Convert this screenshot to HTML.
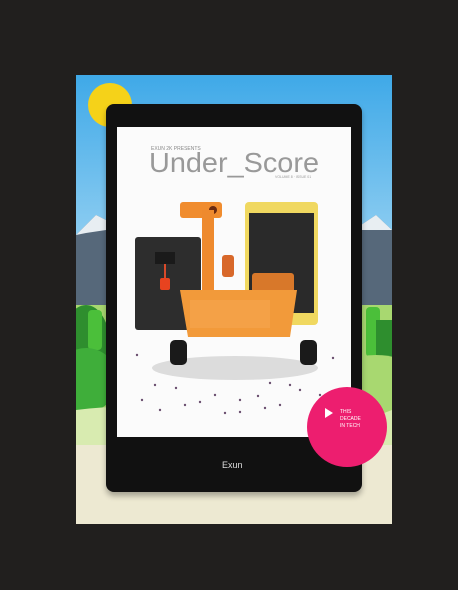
<!DOCTYPE html>
<html><head><style>
*{margin:0;padding:0;box-sizing:border-box}
body{width:458px;height:590px;background:#211f1e;position:relative;overflow:hidden;font-family:"Liberation Sans",sans-serif}
.a{position:absolute}
</style></head><body>
<div class="a" style="left:76px;top:75px;width:316px;height:449px;overflow:hidden;background:linear-gradient(#3fa9e8,#9fd5f3 45%,#bfe4f6 60%)">
<svg class="a" style="left:0;top:0" width="316" height="449">
<circle cx="34" cy="30" r="22" fill="#f5d219"/>
<polygon points="0,160 20,140 40,150 60,135 80,160 80,260 0,260" fill="#56687a"/>
<polygon points="0,160 20,140 40,150 60,135 70,148 50,145 30,155 10,158" fill="#e8eef2"/>
<polygon points="316,155 300,140 285,150 270,145 250,160 250,260 316,260" fill="#56687a"/>
<polygon points="316,155 300,140 285,150 270,145 260,155 290,155" fill="#e8eef2"/>
<rect x="0" y="230" width="316" height="120" fill="#a8d870"/>
<ellipse cx="10" cy="270" rx="24" ry="40" fill="#2e8e2e"/>
<rect x="12" y="235" width="14" height="40" rx="4" fill="#4bbf3a"/>
<ellipse cx="10" cy="305" rx="32" ry="32" fill="#3fae3a"/>
<rect x="290" y="232" width="14" height="50" rx="4" fill="#4bbf3a"/>
<rect x="300" y="245" width="16" height="60" fill="#2e8e2e"/>
<ellipse cx="300" cy="300" rx="40" ry="20" fill="#a8d870"/>
<rect x="0" y="340" width="316" height="109" fill="#ede9d2"/>
<path d="M0 335 Q80 325 160 345 T316 335 V370 H0Z" fill="#d8ebb0"/>
</svg>
<div class="a" style="left:30px;top:29px;width:256px;height:388px;background:#111;border-radius:8px;box-shadow:0 4px 6px rgba(0,0,0,.3)"></div>
<div class="a" style="left:41px;top:52px;width:234px;height:310px;background:#fbfbfb"></div>
</div>
<svg class="a" style="left:0;top:0" width="458" height="590">
<text x="151" y="150" font-size="5" fill="#888">EXUN 2K PRESENTS</text>
<text x="149" y="172" font-size="28" fill="#999" font-family="Liberation Sans" textLength="170" lengthAdjust="spacingAndGlyphs">Under_Score</text>
<text x="275" y="178" font-size="3.5" fill="#999">VOLUME 8 · ISSUE 01</text>
<rect x="245" y="202" width="73" height="123" rx="4" fill="#f0d860"/>
<rect x="249" y="213" width="65" height="100" fill="#2a2a2a"/>
<rect x="135" y="237" width="66" height="93" rx="3" fill="#2d2d2d"/>
<rect x="155" y="252" width="20" height="12" fill="#1a1a1a"/>
<rect x="164" y="264" width="2" height="15" fill="#d84a2a"/>
<rect x="160" y="278" width="10" height="12" rx="2" fill="#e8431f"/>
<rect x="252" y="273" width="42" height="25" rx="3" fill="#d8782a"/>
<rect x="180" y="202" width="42" height="16" rx="3" fill="#f08c2e"/>
<circle cx="213" cy="210" r="4" fill="#6a2a10"/>
<rect x="202" y="210" width="12" height="82" fill="#ee8a2e"/>
<rect x="222" y="255" width="12" height="22" rx="3" fill="#d8682a"/>
<path d="M180 290 H297 L290 337 H188 Z" fill="#f29a3a"/>
<rect x="190" y="300" width="80" height="28" fill="#f5a650" opacity=".6"/>
<ellipse cx="235" cy="368" rx="83" ry="12" fill="#dcdcdc"/>
<rect x="170" y="340" width="17" height="25" rx="5" fill="#1a1a1a"/>
<rect x="300" y="340" width="17" height="25" rx="5" fill="#1a1a1a"/>
<g fill="#6b5070">
<circle cx="137" cy="355" r="1.2"/><circle cx="155" cy="385" r="1.2"/><circle cx="176" cy="388" r="1.2"/><circle cx="200" cy="402" r="1.2"/><circle cx="215" cy="395" r="1.2"/><circle cx="240" cy="400" r="1.2"/><circle cx="258" cy="396" r="1.2"/><circle cx="265" cy="408" r="1.2"/><circle cx="160" cy="410" r="1.2"/><circle cx="225" cy="413" r="1.2"/><circle cx="290" cy="385" r="1.2"/><circle cx="300" cy="390" r="1.2"/><circle cx="320" cy="395" r="1.2"/><circle cx="280" cy="405" r="1.2"/><circle cx="270" cy="383" r="1.2"/><circle cx="185" cy="405" r="1.2"/><circle cx="240" cy="412" r="1.2"/><circle cx="333" cy="358" r="1.2"/><circle cx="142" cy="400" r="1.2"/>
</g>
<circle cx="347" cy="427" r="40" fill="#ed1e6f"/>
<path d="M325 408 L333 413 L325 418 Z" fill="#fff"/>
<text x="340" y="413" font-size="5" fill="#fff">THIS</text>
<text x="340" y="420" font-size="5" fill="#fff">DECADE</text>
<text x="340" y="427" font-size="5" fill="#fff">IN TECH</text>
<text x="222" y="468" font-size="9" fill="#ddd">Exun</text>
</svg>
</body></html>
